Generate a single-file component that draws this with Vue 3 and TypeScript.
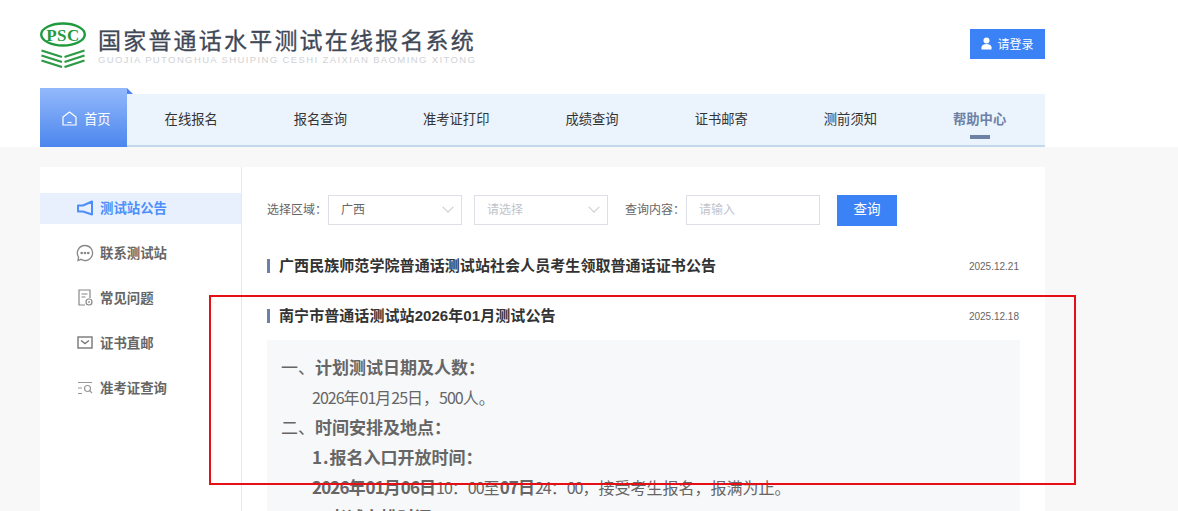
<script setup lang="ts">
const navItems: string[] = ['在线报名', '报名查询', '准考证打印', '成绩查询', '证书邮寄', '测前须知']
</script>

<template>
  <div class="page">
    <header class="header">
      <div class="wrap">
        <div class="top">
          <div class="brand">
            <svg class="logo" width="47" height="46" viewBox="0 0 47 46">
              <ellipse cx="23" cy="12.500" rx="21.800" ry="11" fill="none" stroke="#1f9a3c" stroke-width="2.400" />
              <text x="23" y="18.500" text-anchor="middle" class="psc">PSC</text>
              <g fill="none" stroke="#2d9a45" stroke-width="2.300">
                <path d="M1.500 28.500L22 35M1.500 33.500L22 40M1.500 38.500L22 45" />
                <path d="M24.500 35L44.500 28.500M24.500 40L44.500 33.500M24.500 45L44.500 38.500" />
              </g>
            </svg>
            <div class="brand-text">
              <div class="brand-title">国家普通话水平测试在线报名系统</div>
              <div class="brand-sub">GUOJIA PUTONGHUA SHUIPING CESHI ZAIXIAN BAOMING XITONG</div>
            </div>
          </div>
          <button class="login">
            <svg width="11" height="13" viewBox="0 0 11 13"><circle cx="5.500" cy="3.400" r="3" fill="#fff" /><path d="M0.500 12.500v-2.200C0.500 8.300 2.400 7 5.500 7s5 1.300 5 3.300v2.200z" fill="#fff" /></svg>
            <span>请登录</span>
          </button>
        </div>
        <nav class="nav">
          <a class="nav-home">
            <svg width="15" height="15" viewBox="0 0 15 15" fill="none" stroke="#fff" stroke-width="1.200"><path d="M1 6L7.500 1 14 6V14H1z" stroke-linejoin="round" /><path d="M5.500 11.500h4" /></svg>
            <span>首页</span>
          </a>
          <a v-for="n in navItems" :key="n" class="nav-item">{{ n }}</a>
          <a class="nav-item nav-active">帮助中心</a>
        </nav>
      </div>
    </header>

    <main class="wrap body">
      <div class="card">
        <aside class="side">
          <a class="side-item on">
            <svg width="18" height="16" viewBox="0 0 18 16" fill="none" stroke="#4d8efa" stroke-width="2"><path d="M16 1.500V14.500L7 11.500H2V5.500H7z" stroke-linejoin="round" /></svg>
            <span>测试站公告</span>
          </a>
          <a class="side-item">
            <svg width="18" height="18" viewBox="0 0 18 18" fill="none" stroke="#888" stroke-width="1.300"><path d="M9 1.500a7.500 7.500 0 1 1-4 13.800l-3 1.200.6-3.400A7.500 7.500 0 0 1 9 1.500z" /><circle cx="5.700" cy="9" r=".7" fill="#888" /><circle cx="9" cy="9" r=".7" fill="#888" /><circle cx="12.300" cy="9" r=".7" fill="#888" /></svg>
            <span>联系测试站</span>
          </a>
          <a class="side-item">
            <svg width="16" height="17" viewBox="0 0 16 17" fill="none" stroke="#888" stroke-width="1.200"><path d="M8 16H2V1H13V9" /><path d="M4.500 5h6M4.500 8h4" /><circle cx="12" cy="13" r="3" /><path d="M12 12v2" /></svg>
            <span>常见问题</span>
          </a>
          <a class="side-item">
            <svg width="16" height="13" viewBox="0 0 16 13" fill="none" stroke="#777" stroke-width="1.400"><rect x="1" y="1" width="14" height="11" /><path d="M4 4.500l4 3 4-3" /></svg>
            <span>证书直邮</span>
          </a>
          <a class="side-item">
            <svg width="16" height="14" viewBox="0 0 16 14" fill="none" stroke="#999" stroke-width="1.200"><path d="M1 1.500h14M1 7h4M1 12.500h4" /><circle cx="10.500" cy="7.500" r="3" /><path d="M12.700 9.700L15 12" /></svg>
            <span>准考证查询</span>
          </a>
        </aside>

        <section class="content">
          <div class="filters">
            <label class="f-label">选择区域：</label>
            <div class="select">
              <span>广西</span>
              <i class="chev"></i>
            </div>
            <div class="select gap12">
              <span class="ph">请选择</span>
              <i class="chev"></i>
            </div>
            <label class="f-label ml17">查询内容：</label>
            <div class="select input"><span class="ph">请输入</span></div>
            <button class="search">查询</button>
          </div>

          <div class="notice">
            <h3 class="n-title">广西民族师范学院普通话测试站社会人员考生领取普通话证书公告</h3>
            <time class="n-date">2025.12.21</time>
          </div>
          <div class="notice second">
            <h3 class="n-title">南宁市普通话测试站2026年01月测试公告</h3>
            <time class="n-date">2025.12.18</time>
          </div>

          <article class="detail">
            <p class="b"><span class="thin">一、</span>计划测试日期及人数：</p>
            <p class="in s"><span class="d">2026</span>年<span class="d">01</span>月<span class="d">25</span>日，<span class="d">500</span>人。</p>
            <p class="b"><span class="thin">二、</span>时间安排及地点：</p>
            <p class="in b"><span class="dot">1.</span>报名入口开放时间：</p>
            <p class="in s"><span class="bb"><span class="db">2026</span>年<span class="db">01</span>月<span class="db">06</span>日</span><span class="d">10</span>：<span class="d">00</span>至<span class="bb"><span class="db">07</span>日</span><span class="d">24</span>：<span class="d">00</span>，接受考生报名，报满为止。</p>
            <p class="in b"><span class="dot">2.</span>考试安排时间：</p>
          </article>
        </section>
      </div>
    </main>

    <div class="mark"></div>
  </div>
</template>

<style>
html, body { margin: 0; background: #f8f8f8; }
</style>

<style scoped>
.page {
  position: relative;
  height: 511px;
  overflow: hidden;
  background: #f8f8f8;
  font-family: "Noto Sans CJK SC", "Liberation Sans", sans-serif;
  color: #333;
}
.wrap { width: 1005px; margin-left: 40px; }
.header { background: #fff; height: 147px; }
.top {
  height: 88px;
  display: flex;
  justify-content: space-between;
  align-items: flex-start;
}
.brand { display: flex; padding-top: 22px; }
.logo { margin-right: 11px; }
.psc { font: bold 17px "Liberation Serif", serif; fill: #1f9a3c; letter-spacing: .5px; }
.brand-text { padding-top: 4px; }
.brand-title {
  font-size: 23px;
  line-height: 26px;
  letter-spacing: 2.200px;
  color: #3f4856;
  -webkit-text-stroke: .3px #3f4856;
  white-space: nowrap;
}
.brand-sub {
  font: 9.500px/12px "Liberation Sans", sans-serif;
  letter-spacing: 1.380px;
  color: #d0d2d6;
  margin-top: 2px;
  white-space: nowrap;
}
.login {
  margin-top: 29px;
  width: 75px;
  height: 30px;
  border: 0;
  padding: 0 0 2px;
  background: #3b82f6;
  color: #fff;
  font: 12px "Noto Sans CJK SC", sans-serif;
  display: flex;
  align-items: center;
  justify-content: center;
  gap: 5px;
}
.nav {
  margin-top: 6px;
  background: #ebf3fd;
  border-bottom: 2px solid #c5d7ea;
  height: 51px;
  display: flex;
  font-size: 13.300px;
  color: #333;
}
.nav-home {
  position: relative;
  width: 87px;
  height: 59px;
  margin-top: -6px;
  box-sizing: border-box;
  padding: 1px 0 0 22px;
  background: linear-gradient(180deg, #93b9fb, #4c86ee);
  color: #fff;
  display: flex;
  align-items: center;
  gap: 7px;
  flex: none;
}
.nav-home svg { margin-top: 1px; }
.nav-home::after {
  content: "";
  position: absolute;
  left: 100%;
  top: 0;
  border-bottom: 6px solid #4c86ee;
  border-right: 6px solid transparent;
}
.nav-item {
  flex: none;
  padding: 0 38px;
  position: relative;
  line-height: 49px;
  height: 51px;
}
.nav-home + .nav-item { padding-left: 37.600px; }
.nav-active { color: #6d81a6; font-weight: 700; }
.nav-active::after {
  content: "";
  position: absolute;
  left: 50%;
  bottom: 6px;
  width: 20px;
  height: 4px;
  margin-left: -10px;
  background: #6d81a6;
}
.body { padding-top: 20px; }
.card {
  background: #fff;
  display: flex;
  height: 400px;
}
.side {
  width: 201px;
  flex: none;
  border-right: 1px solid #e8e8e8;
  padding-top: 26px;
}
.side-item {
  height: 31px;
  margin-bottom: 14px;
  display: flex;
  align-items: center;
  padding-left: 36px;
  gap: 6px;
  font-size: 13.400px;
  font-weight: 700;
  color: #666;
}
.side-item span { margin-top: -4px; }
.side-item svg { width: 18px; flex: none; margin-top: -2px; }
.side-item.on { background: #e8f0fd; color: #4d8efa; }
.content { flex: 1; padding: 28px 25px 0; min-width: 0; }
.filters { display: flex; align-items: center; height: 30px; font-size: 12px; color: #666; }
.f-label { margin: -3px 1px 0 0; white-space: nowrap; }
.f-label.ml17 { margin-left: 17px; }
.select {
  width: 134px;
  height: 30px;
  box-sizing: border-box;
  border: 1px solid #dcdfe6;
  display: flex;
  align-items: center;
  justify-content: space-between;
  padding: 0 9px 3px 12px;
  font-size: 12px;
}
.gap12 { margin-left: 12px; }
.input { margin-right: 17px; }
.ph { color: #c0c4cc; }
.chev {
  width: 7px;
  height: 7px;
  margin-top: 3px;
  border-right: 1px solid #c8ccd4;
  border-bottom: 1px solid #c8ccd4;
  transform: rotate(45deg) translate(-2px, -2px);
}
.search {
  width: 60px;
  height: 31px;
  border: 0;
  background: #3b82f6;
  color: #fff;
  font: 13.500px "Noto Sans CJK SC", sans-serif;
  padding: 0 0 4px;
}
.notice {
  display: flex;
  justify-content: space-between;
  align-items: center;
  margin-top: 26px;
  height: 30px;
}
.notice.second { margin-top: 20px; }
.n-title {
  margin: 0;
  font: 700 15px/14px "Liberation Sans", "Noto Sans CJK SC", sans-serif;
  letter-spacing: .07px;
  color: #333;
  border-left: 3px solid #6d81a6;
  padding-left: 9px;
}
.n-date { font: 10px "Liberation Sans", sans-serif; color: #666; margin-right: 1px; }
.detail {
  margin-top: 9px;
  height: 300px;
  background: #f7f8fa;
  padding: 12px 14px;
  color: #666;
}
.detail p {
  margin: 0;
  line-height: 30px;
  font-size: 17px;
  white-space: nowrap;
}
.b, .bb { font-weight: 700; }
.bb { font-size: 17px; }
.thin { font-weight: 400; }
.detail p.s { font-size: 16px; }
.detail p.in { padding-left: 31px; }
.d { letter-spacing: -1px; }
.db { letter-spacing: -.9px; }
.dot { letter-spacing: 1px; }
.mark {
  position: absolute;
  left: 209px;
  top: 295px;
  width: 867px;
  height: 190px;
  box-sizing: border-box;
  border: 2px solid #e60f16;
}
</style>
